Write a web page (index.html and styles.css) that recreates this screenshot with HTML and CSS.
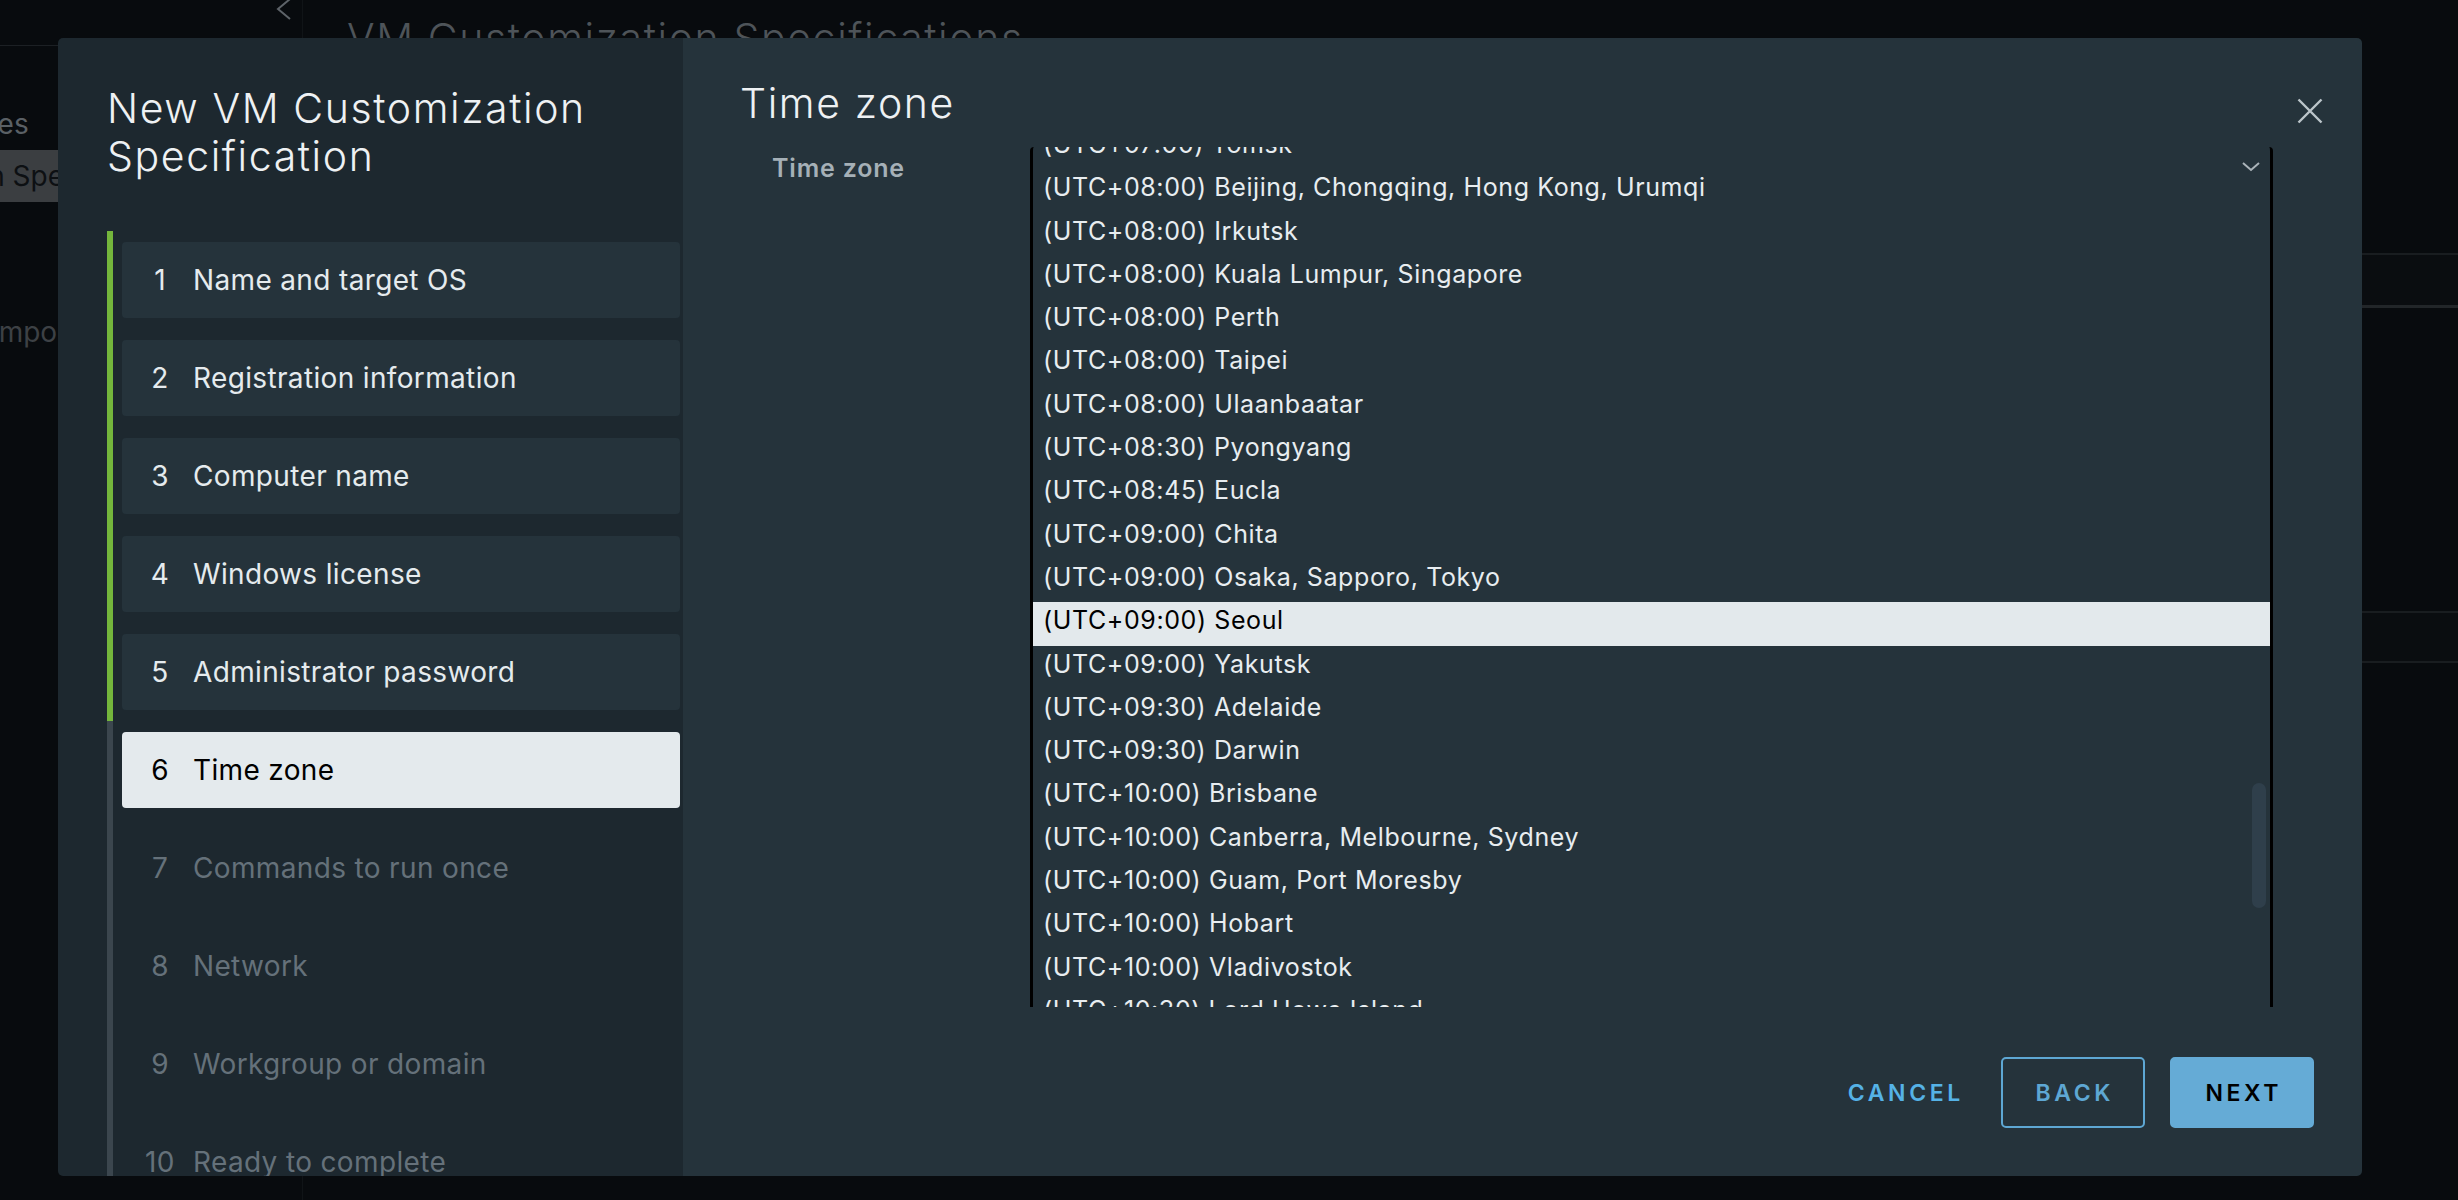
FILE: index.html
```html
<!DOCTYPE html>
<html lang="en">
  <head>
    <meta charset="UTF-8" />
    <meta name="viewport" content="width=device-width, initial-scale=1.0" />
    <title>New VM Customization Specification</title>
    <link rel="stylesheet" href="styles.css">
  </head>
  <body>
    <div class="app">
      <aside class="sidebar">
        <div class="sidebar-top">
          <svg class="collapse" width="16" height="22" viewBox="0 0 16 22">
            <path d="M14 0 L2 10 L14 20" fill="none" stroke="#5d6368" stroke-width="2" />
          </svg>
        </div>
        <ul class="tree">
          <li>VM Storage Policies</li>
          <li class="selected">VM Customization Specifications</li>
          <li>Host Profiles</li>
          <li>Compute Policies</li>
          <li class="dim">Storage Policy Components</li>
        </ul>
      </aside>
      <main class="main">
        <h1 class="page-title">VM Customization Specifications</h1>
        <div class="datagrid">
          <div class="dg-head"></div>
          <div class="dg-body"></div>
          <div class="dg-foot"></div>
        </div>
      </main>
    </div>

    <!-- wizard modal -->
    <div class="modal">
      <div class="wizard-nav">
        <h2 class="wizard-title">New VM Customization Specification</h2>
        <ol class="steps">
          <li class="step done"><div class="step-box"><span class="num">1</span>Name and target OS</div></li>
          <li class="step done"><div class="step-box"><span class="num">2</span>Registration information</div></li>
          <li class="step done"><div class="step-box"><span class="num">3</span>Computer name</div></li>
          <li class="step done"><div class="step-box"><span class="num">4</span>Windows license</div></li>
          <li class="step done"><div class="step-box"><span class="num">5</span>Administrator password</div></li>
          <li class="step active"><div class="step-box"><span class="num">6</span>Time zone</div></li>
          <li class="step"><div class="step-box"><span class="num">7</span>Commands to run once</div></li>
          <li class="step"><div class="step-box"><span class="num">8</span>Network</div></li>
          <li class="step"><div class="step-box"><span class="num">9</span>Workgroup or domain</div></li>
          <li class="step"><div class="step-box"><span class="num">10</span>Ready to complete</div></li>
        </ol>
      </div>

      <div class="wizard-body">
        <h3 class="content-title">Time zone</h3>
        <button class="close" aria-label="Close">
          <svg width="26" height="26" viewBox="0 0 26 26">
            <path d="M1.5 1.5 L24.5 24.5 M24.5 1.5 L1.5 24.5" stroke="#bcc5ca" stroke-width="2.4" fill="none" />
          </svg>
        </button>

        <div class="form-row">
          <label class="field-label">Time zone</label>
          <div class="tz-select">
            <ul class="tz-list">
              <li>(UTC+07:00) Tomsk</li>
              <li>(UTC+08:00) Beijing, Chongqing, Hong Kong, Urumqi</li>
              <li>(UTC+08:00) Irkutsk</li>
              <li>(UTC+08:00) Kuala Lumpur, Singapore</li>
              <li>(UTC+08:00) Perth</li>
              <li>(UTC+08:00) Taipei</li>
              <li>(UTC+08:00) Ulaanbaatar</li>
              <li>(UTC+08:30) Pyongyang</li>
              <li>(UTC+08:45) Eucla</li>
              <li>(UTC+09:00) Chita</li>
              <li>(UTC+09:00) Osaka, Sapporo, Tokyo</li>
              <li class="selected">(UTC+09:00) Seoul</li>
              <li>(UTC+09:00) Yakutsk</li>
              <li>(UTC+09:30) Adelaide</li>
              <li>(UTC+09:30) Darwin</li>
              <li>(UTC+10:00) Brisbane</li>
              <li>(UTC+10:00) Canberra, Melbourne, Sydney</li>
              <li>(UTC+10:00) Guam, Port Moresby</li>
              <li>(UTC+10:00) Hobart</li>
              <li>(UTC+10:00) Vladivostok</li>
              <li>(UTC+10:30) Lord Howe Island</li>
              <li>(UTC+11:00) Bougainville Island</li>
            </ul>
            <svg class="chevron" width="18" height="10" viewBox="0 0 18 10">
              <path d="M1 1 L9 8 L17 1" fill="none" stroke="#aab3b9" stroke-width="2" />
            </svg>
            <div class="thumb"></div>
          </div>
        </div>

        <div class="footer">
          <button class="btn btn-link">Cancel</button>
          <button class="btn btn-outline">Back</button>
          <button class="btn btn-primary">Next</button>
        </div>
      </div>
    </div>
  </body>
</html>
```

FILE: styles.css
```css
body {
  margin: 0;
  width: 2458px;
  height: 1200px;
  overflow: hidden;
  position: relative;
  background-color: #080b0e;
  font-family: Inter, "Noto Sans", sans-serif;
}
.app {
  display: flex;
  height: 1200px;
}

/* background page */
.sidebar {
  width: 303px;
  flex-shrink: 0;
  border-right: 1px solid #101417;
  box-sizing: border-box;
  overflow: hidden;
}
.sidebar-top {
  height: 46px;
  border-bottom: 1px solid #1c2024;
  box-sizing: border-box;
  display: flex;
  justify-content: flex-end;
  padding-right: 10px;
}
.collapse {
  margin-top: -1px;
}
.tree {
  list-style: none;
  margin: 0 0 0 -237px;
  padding: 52px 0 0 0;
  font-size: 28px;
  color: #5a6065;
}
.tree > li {
  height: 52px;
  line-height: 52px;
  white-space: nowrap;
}
.tree > li.selected {
  background-color: #3b3e41;
  color: #0d1013;
}
.tree > li.dim {
  color: #3d4145;
}
.main {
  flex: 1;
  display: flex;
  flex-direction: column;
}
.page-title {
  margin: 14px 0 0 44px;
  font-size: 41px;
  line-height: 48px;
  font-weight: 300;
  letter-spacing: 1.6px;
  color: #4e5459;
  white-space: nowrap;
}
.datagrid {
  margin: 191px 0 0 44px;
}
.dg-head {
  height: 50px;
  background-color: #0a0d10;
  border-top: 2px solid #191d20;
  border-bottom: 3px solid #222629;
}
.dg-body {
  height: 303px;
}
.dg-foot {
  height: 48px;
  background-color: #0a0d10;
  border-top: 2px solid #191d20;
  border-bottom: 2px solid #191d20;
}

/* modal */
.modal {
  position: absolute;
  left: 58px;
  top: 38px;
  width: 2304px;
  height: 1138px;
  border-radius: 5px;
  overflow: hidden;
  display: flex;
}
.wizard-nav {
  width: 625px;
  flex-shrink: 0;
  background-color: #1d282f;
  padding: 46px 0 0 49px;
  box-sizing: border-box;
}
.wizard-title {
  margin: 0;
  font-size: 41px;
  line-height: 48px;
  font-weight: 300;
  letter-spacing: 1.6px;
  color: #eef1f3;
}
.steps {
  list-style: none;
  margin: 51px 0 0 0;
  padding: 0;
}
.step {
  height: 98px;
  box-sizing: border-box;
  padding: 11px 3px 11px 9px;
  border-left: 6px solid #3b464e;
}
.step.done {
  border-left-color: #74b63c;
}
.step-box {
  height: 76px;
  display: flex;
  align-items: center;
  padding-left: 22px;
  border-radius: 4px;
  font-size: 28px;
  letter-spacing: 0.35px;
  color: #65717a;
  white-space: nowrap;
}
.step.done .step-box {
  background-color: #25333b;
  color: #e5ebee;
}
.step.active .step-box {
  background-color: #e4eaed;
  color: #000;
}
.num {
  width: 32px;
  margin-right: 17px;
  text-align: center;
}

.wizard-body {
  flex: 1;
  position: relative;
  background-color: #25333b;
  padding: 40px 48px 48px 57px;
  display: flex;
  flex-direction: column;
}
.content-title {
  margin: 0;
  font-size: 41px;
  line-height: 50px;
  font-weight: 300;
  letter-spacing: 1.6px;
  color: #eef1f3;
}
.close {
  position: absolute;
  top: 60px;
  right: 39px;
  width: 26px;
  height: 26px;
  padding: 0;
  border: 0;
  background: none;
  cursor: pointer;
}
.form-row {
  display: flex;
  align-items: flex-start;
  margin-top: 19px;
}
.field-label {
  width: 290px;
  flex-shrink: 0;
  box-sizing: border-box;
  padding-left: 32px;
  margin-top: 3px;
  font-size: 25px;
  line-height: 36px;
  font-weight: 600;
  letter-spacing: 0.8px;
  color: #a5b0b7;
}
.tz-select {
  position: relative;
  width: 1243px;
  height: 860px;
  box-sizing: border-box;
  border-left: 3px solid #000;
  border-right: 3px solid #000;
  border-radius: 4px 4px 0 0;
  overflow: hidden;
}
.tz-list {
  list-style: none;
  margin: -21px 0 0 0;
  padding: 0;
}
.tz-list > li {
  height: 43.3px;
  line-height: 37px;
  padding-left: 10px;
  font-size: 25px;
  letter-spacing: 0.6px;
  color: #e8edf0;
  white-space: nowrap;
}
.tz-list > li.selected {
  background-color: #e3e9ec;
  color: #000;
}
.chevron {
  position: absolute;
  left: 1209px;
  top: 15px;
}
.thumb {
  position: absolute;
  right: 4px;
  top: 636px;
  width: 14px;
  height: 125px;
  border-radius: 7px;
  background-color: #2f3f4b;
}

.footer {
  margin-top: auto;
  display: flex;
  justify-content: flex-end;
  gap: 25px;
}
.btn {
  width: 144px;
  height: 71px;
  box-sizing: border-box;
  border: 2px solid transparent;
  border-radius: 5px;
  background: none;
  font-family: Inter, "Noto Sans", sans-serif;
  font-size: 23px;
  font-weight: 600;
  letter-spacing: 3.6px;
  text-indent: 3.6px;
  text-transform: uppercase;
  cursor: pointer;
}
.btn-link {
  color: #55b2e6;
}
.btn-outline {
  border-color: #5ea7d3;
  color: #5ea7d3;
}
.btn-primary {
  background-color: #65abd6;
  border-color: #65abd6;
  color: #000;
}
```
